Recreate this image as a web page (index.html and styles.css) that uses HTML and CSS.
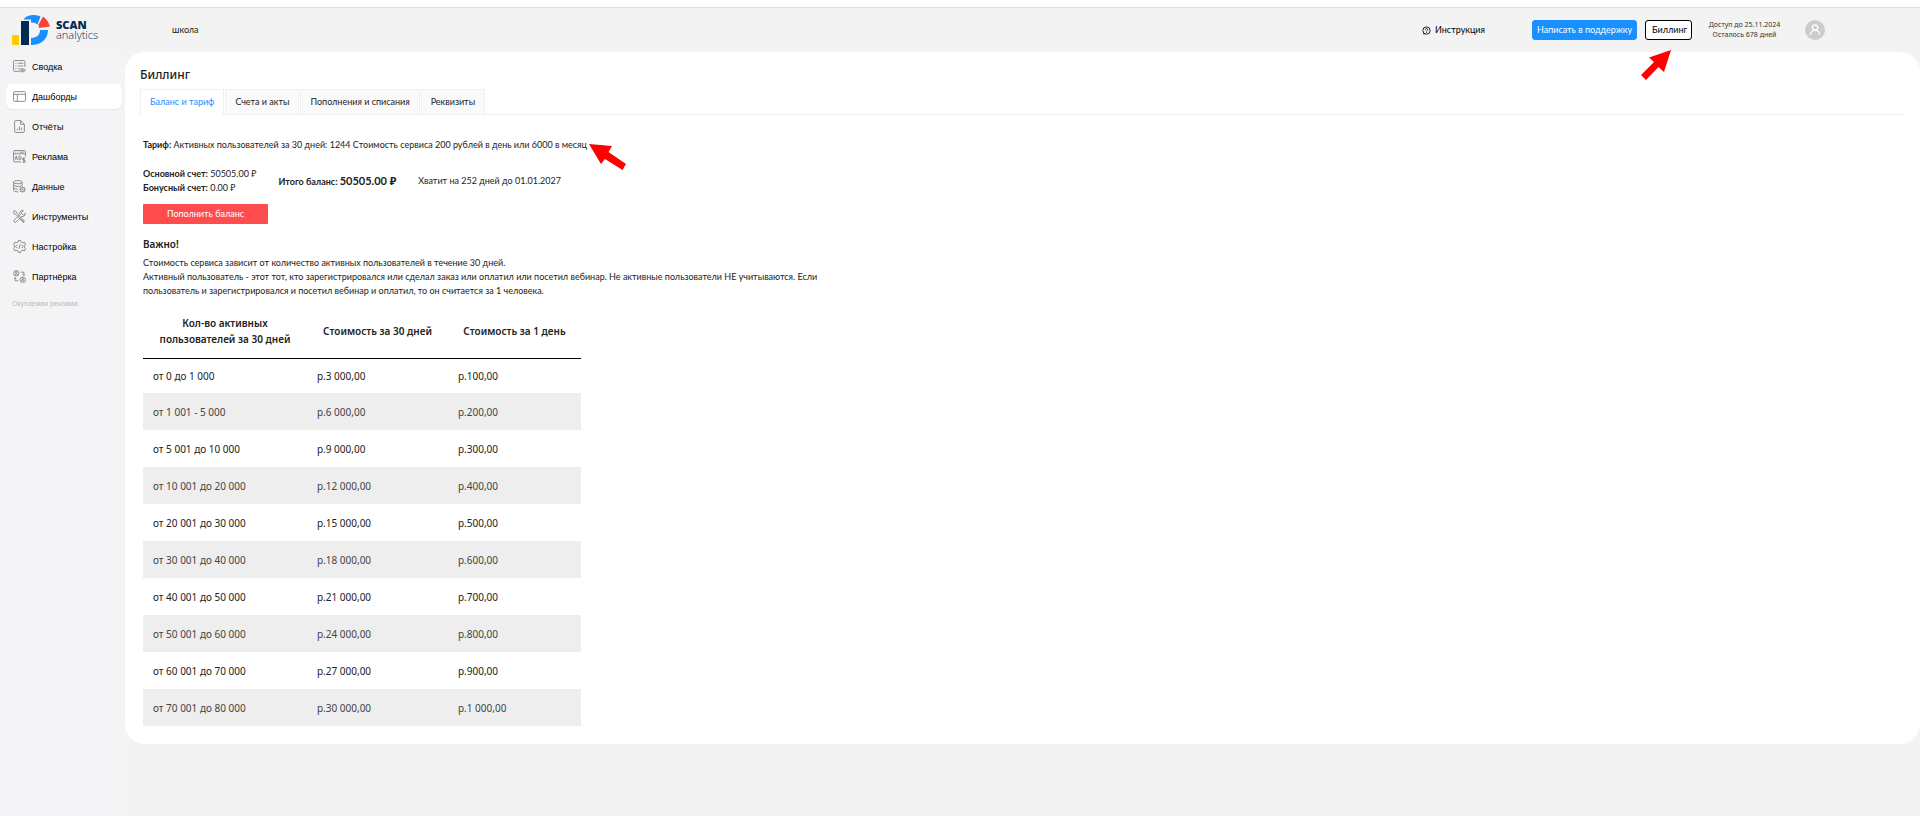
FILE: index.html
```html
<!DOCTYPE html>
<html lang="ru">
<head>
    <meta charset="UTF-8">
    <meta name="viewport" content="width=device-width, initial-scale=1.0">
    <title>Биллинг - SCAN analytics</title>
    <link rel="stylesheet" href="styles.css">
</head>
<body>
    <header class="header">
        <a href="#" class="logo">
            <svg class="logo-mark" viewBox="0 0 38 30">
                <rect x="0" y="20" width="7" height="10" fill="#ffcc00"/>
                <rect x="9" y="6" width="8" height="24" fill="#002b54"/>
                <path d="M11.500 4.500C14 1 18 0 22 0Q26 0 28.500 1.500L25.500 9.500Q23 7 19 7.500V4.500Z" fill="#1890ff"/>
                <path d="M31 1.500Q36 5 38 11.500L27 13L26.500 9.500Z" fill="#ff4136"/>
                <path d="M28 15H36C36 24 29 30 19 30V23C25 22.500 28 20 28 15Z" fill="#1890ff"/>
            </svg>
            <span class="logo-text"><b>SCAN</b><span>analytics</span></span>
        </a>
        <span class="school">школа</span>
        <div class="header-right">
            <a href="#" class="help">
                <svg class="help-icon" viewBox="0 0 16 16">
                    <circle cx="8" cy="8" r="6.500"/>
                    <path d="M6 6.500a2 2 0 1 1 2.800 1.800Q8 8.700 8 9.600M8 11v1.300M2 14h3"/>
                </svg>
                Инструкция
            </a>
            <button type="button" class="btn btn-support">Написать в поддержку</button>
            <div class="billing">
                <button type="button" class="btn btn-billing">Биллинг</button>
                <svg class="arrow arrow-billing" viewBox="0 0 30 31">
                    <path d="M30 0L23 22L17.500 17L5 30L0 25L13 12L8 7.500Z"/>
                </svg>
            </div>
            <div class="access">Доступ до 25.11.2024<br>Осталось 678 дней</div>
            <a href="#" class="avatar" aria-label="Профиль">
                <svg viewBox="0 0 20 20">
                    <circle cx="10" cy="7.500" r="2.700"/>
                    <path d="M5.500 15c0-6 9-6 9 0"/>
                </svg>
            </a>
        </div>
    </header>

    <div class="layout">
        <nav class="sidebar">
            <a href="#" class="nav-item">
                <svg viewBox="0 0 24 24"><path d="M12 21H3a2 2 0 0 1-2-2V3a2 2 0 0 1 2-2h17a2 2 0 0 1 2 2v10M4.500 6h2M9 6h10M4.500 11h2M9 11h10M4.500 16h2M9 16h3M12 19q5-6 11 0q-6 6-11 0z"/><circle cx="17.500" cy="19" r="1.500"/></svg>
                Сводка
            </a>
            <a href="#" class="nav-item active">
                <svg viewBox="0 0 24 24"><rect x="1" y="3" width="22" height="18" rx="2"/><path d="M1 8h22M8 8v13"/></svg>
                Дашборды
            </a>
            <a href="#" class="nav-item">
                <svg viewBox="0 0 24 24"><path d="M14 1H5a2 2 0 0 0-2 2v18a2 2 0 0 0 2 2h14a2 2 0 0 0 2-2V8zM14 1v7h7M8 19v-3M12 19v-7M16 19v-5"/></svg>
                Отчёты
            </a>
            <a href="#" class="nav-item">
                <svg viewBox="0 0 24 24"><path d="M15 22H3a2 2 0 0 1-2-2V3a2 2 0 0 1 2-2h18a2 2 0 0 1 2 2v9M1 7h22M4 4h1M8 4h1M12 4h8M4 18l2-7 2 7M5 16h2M11 11v7q4 0 4-3.500T11 11M22 15h-4v3.500h4V23h-4M20 14v10"/></svg>
                Реклама
            </a>
            <a href="#" class="nav-item">
                <svg viewBox="0 0 24 24"><ellipse cx="9" cy="4" rx="8" ry="3"/><path d="M1 4v5q0 3 8 3t8-3V4M1 9v5q0 3 8 3M1 14v5q0 3 9 3"/><circle cx="17.500" cy="17.500" r="4"/><circle cx="17.500" cy="17.500" r="1"/><path d="M17.500 11.500v2M17.500 21.500v2M11.500 17.500h2M21.500 17.500h2M13.200 13.200l1.500 1.500M20.300 20.300l1.500 1.500M13.200 21.800l1.500-1.500M20.300 14.700l1.500-1.500"/></svg>
                Данные
            </a>
            <a href="#" class="nav-item">
                <svg viewBox="0 0 24 24"><path d="M2 1l4 2 1 3 14 14-2 3L5 8 2 7 1 3zM17 8l-2-2 4-5q-5-1-7 4l1 3L2 19q-1 4 3 4l11-11q6 1 7-6l-4 3zM14 16l6 6"/></svg>
                Инструменты
            </a>
            <a href="#" class="nav-item">
                <svg viewBox="0 0 24 24"><path d="M10 1h4l1 3 3 1 3-1 2 4-2 3v2l2 3-2 4-3-1-3 1-1 3h-4l-1-3-3-1-3 1-2-4 2-3v-2L1 8l2-4 3 1 3-1zM8 9l-3 3 3 3M16 9l3 3-3 3M13 8l-2 8"/></svg>
                Настройка
            </a>
            <a href="#" class="nav-item">
                <svg viewBox="0 0 24 24"><circle cx="6" cy="6" r="5"/><circle cx="6" cy="4.500" r="1.500"/><path d="M3 9q3-4 6 0M14 4h6v6M18 8l2 2 2-2M10 20H4v-6M2 16l2-2 2 2"/><circle cx="18" cy="18" r="5"/><circle cx="18" cy="16.500" r="1.500"/><path d="M15 21q3-4 6 0"/></svg>
                Партнёрка
            </a>
            <div class="nav-note">Окупаемая реклама</div>
        </nav>

        <main class="card">
            <h1>Биллинг</h1>
            <div class="tabs">
                <button type="button" class="tab active">Баланс и тариф</button>
                <button type="button" class="tab">Счета и акты</button>
                <button type="button" class="tab">Пополнения и списания</button>
                <button type="button" class="tab">Реквизиты</button>
            </div>

            <div class="content">
                <div class="tariff">
                    <b>Тариф:</b> Активных пользователей за 30 дней: 1244 Стоимость сервиса 200 рублей в день или 6000 в месяц
                    <svg class="arrow arrow-tariff" viewBox="0 0 37 26">
                        <path d="M0 0L23 2L19.500 8L37 20L33.500 26L16 15L12 20Z"/>
                    </svg>
                </div>

                <div class="balance">
                    <div class="accounts">
                        <b>Основной счет:</b> 50505.00 ₽<br>
                        <b>Бонусный счет:</b> 0.00 ₽
                    </div>
                    <div class="total">Итого баланс: <span>50505.00 ₽</span></div>
                    <div class="enough">Хватит на 252 дней до 01.01.2027</div>
                </div>

                <button type="button" class="btn-pay">Пополнить баланс</button>

                <h2>Важно!</h2>
                <p class="info">
                    Стоимость сервиса зависит от количество активных пользователей в течение 30 дней.<br>
                    Активный пользователь - этот тот, кто зарегистрировался или сделал заказ или оплатил или посетил вебинар. Не активные пользователи НЕ учитываются. Если пользователь и зарегистрировался и посетил вебинар и оплатил, то он считается за 1 человека.
                </p>

                <table class="prices">
                    <thead>
                        <tr>
                            <th class="col-users">Кол-во активных пользователей за 30 дней</th>
                            <th class="col-month">Стоимость за 30 дней</th>
                            <th class="col-day">Стоимость за 1 день</th>
                        </tr>
                    </thead>
                    <tbody>
                        <tr><td>от 0 до 1 000</td><td>р.3 000,00</td><td>р.100,00</td></tr>
                        <tr><td>от 1 001 - 5 000</td><td>р.6 000,00</td><td>р.200,00</td></tr>
                        <tr><td>от 5 001 до 10 000</td><td>р.9 000,00</td><td>р.300,00</td></tr>
                        <tr><td>от 10 001 до 20 000</td><td>р.12 000,00</td><td>р.400,00</td></tr>
                        <tr><td>от 20 001 до 30 000</td><td>р.15 000,00</td><td>р.500,00</td></tr>
                        <tr><td>от 30 001 до 40 000</td><td>р.18 000,00</td><td>р.600,00</td></tr>
                        <tr><td>от 40 001 до 50 000</td><td>р.21 000,00</td><td>р.700,00</td></tr>
                        <tr><td>от 50 001 до 60 000</td><td>р.24 000,00</td><td>р.800,00</td></tr>
                        <tr><td>от 60 001 до 70 000</td><td>р.27 000,00</td><td>р.900,00</td></tr>
                        <tr><td>от 70 001 до 80 000</td><td>р.30 000,00</td><td>р.1 000,00</td></tr>
                    </tbody>
                </table>
            </div>
        </main>
    </div>
</body>
</html>
```
FILE: styles.css
```css
* {
    box-sizing: border-box;
}
body {
    margin: 0;
    padding-top: 7px;
    min-height: 100vh;
    display: flex;
    flex-direction: column;
    background-color: #fff;
    color: #222;
    font-family: Lato, "Noto Sans", sans-serif;
    font-size: 9px;
    line-height: 14px;
}
button {
    font-family: inherit;
    font-size: inherit;
    line-height: inherit;
    cursor: pointer;
}
a {
    color: inherit;
    text-decoration: none;
}

/* Header */
.header {
    display: flex;
    align-items: center;
    height: 45px;
    padding-left: 12px;
    background-color: #f3f3f3;
    border-top: 1px solid #ddd;
}
.logo {
    display: flex;
    align-items: center;
    gap: 6px;
    width: 160px;
    color: #002b54;
}
.logo-mark {
    width: 38px;
    height: 30px;
}
.logo-text {
    display: flex;
    flex-direction: column;
    font-family: "Open Sans", sans-serif;
    font-size: 11px;
    font-weight: 300;
    line-height: 10px;
}
.logo-text b {
    font-weight: 800;
}
.header-right {
    display: flex;
    align-items: center;
    margin-left: auto;
    padding-right: 95px;
    color: #000;
}
.help {
    display: flex;
    align-items: center;
    gap: 4px;
    margin-right: 47px;
}
.help-icon {
    width: 9px;
    height: 9px;
    fill: none;
    stroke: #000;
    stroke-width: 1.5;
}
.btn {
    height: 20px;
    padding: 0 6px;
    border-radius: 3px;
    line-height: 16px;
}
.btn-support {
    width: 105px;
    padding: 0;
    margin-right: 8px;
    border: 1px solid #1890ff;
    background-color: #1890ff;
    color: #fff;
}
.billing {
    position: relative;
}
.btn-billing {
    width: 47px;
    border: 1px solid #000;
    background-color: #fff;
    color: #000;
}
.access {
    width: 105px;
    text-align: center;
    color: #333;
    font-family: "Noto Sans", sans-serif;
    font-size: 7px;
    line-height: 10px;
}
.avatar {
    width: 20px;
    height: 20px;
    margin-left: 8px;
    border-radius: 50%;
    background-color: #ccc;
}
.avatar svg {
    display: block;
    fill: none;
    stroke: #fff;
    stroke-width: 1.2;
}

/* Red pointers */
.arrow {
    position: absolute;
    fill: #f00;
}
.arrow-billing {
    top: 30px;
    right: 21px;
    width: 30px;
    height: 31px;
}
.arrow-tariff {
    top: 6px;
    left: 100%;
    width: 37px;
    height: 26px;
    margin-left: 2px;
}

.layout {
    display: flex;
    flex: 1;
    background-color: #f3f3f3;
}

/* Sidebar */
.sidebar {
    width: 125px;
    flex-shrink: 0;
    padding: 2px 3px 0 6px;
    background-color: #f4f4f7;
    font-family: "Liberation Sans", Roboto, sans-serif;
    color: #000;
}
.nav-item {
    display: flex;
    align-items: center;
    gap: 6px;
    height: 25px;
    margin-bottom: 5px;
    padding-left: 7px;
    border-radius: 6px;
}
.nav-item.active {
    background-color: #fff;
    box-shadow: 0 1px 2px rgba(0, 0, 0, 0.06);
}
.nav-item svg {
    width: 13px;
    height: 13px;
    fill: none;
    stroke: #777;
    stroke-width: 1.5;
}
.nav-note {
    padding: 3px 0 0 6px;
    color: #bbb;
    font-size: 7px;
}

/* Content card */
.card {
    flex: 1;
    align-self: flex-start;
    padding: 14px 15px 18px;
    border-radius: 20px;
    background-color: #fff;
}
h1 {
    margin: 0 0 6px;
    font-family: "Noto Sans", sans-serif;
    font-size: 12px;
    font-weight: 500;
    line-height: 17px;
}
.tabs {
    display: flex;
    gap: 1px;
    border-bottom: 1px solid #f0f0f0;
}
.tab {
    height: 26px;
    margin-bottom: -1px;
    padding: 0 9px;
    border: 1px solid #f0f0f0;
    border-radius: 1px 1px 0 0;
    background-color: #fafafa;
    color: #222;
}
.tab.active {
    border-bottom-color: #fff;
    background-color: #fff;
    color: #1890ff;
}
.content {
    padding: 23px 3px 0;
}
.tariff {
    position: relative;
    width: max-content;
    margin-bottom: 15px;
}
b,
.total {
    font-weight: 700;
}
.balance {
    display: flex;
    align-items: center;
    gap: 22px;
    margin-bottom: 9px;
}
.total span {
    font-size: 11px;
}
.btn-pay {
    display: block;
    width: 125px;
    height: 20px;
    padding: 0;
    border: 0;
    border-radius: 1px;
    background-color: #ff4d4f;
    color: #fff;
}
h2 {
    margin: 13px 0 5px;
    font-family: "Noto Sans", sans-serif;
    font-size: 10px;
    font-weight: 600;
    line-height: 14px;
}
.info {
    max-width: 700px;
    margin: 0 0 7px;
}

/* Price table */
.prices {
    border-collapse: collapse;
    font-family: "Noto Sans", sans-serif;
    font-size: 10px;
    line-height: 16px;
}
.prices th {
    height: 53px;
    padding: 0 10px;
    border-bottom: 1px solid #000;
    font-weight: 600;
}
.prices td {
    height: 37px;
    padding: 0 10px;
}
.prices tbody tr:first-child td {
    height: 35px;
}
.prices tr:nth-child(even) td {
    background-color: #eee;
    color: #444;
}
.col-users {
    width: 164px;
}
.col-month {
    width: 141px;
}
.col-day {
    width: 133px;
}
```
